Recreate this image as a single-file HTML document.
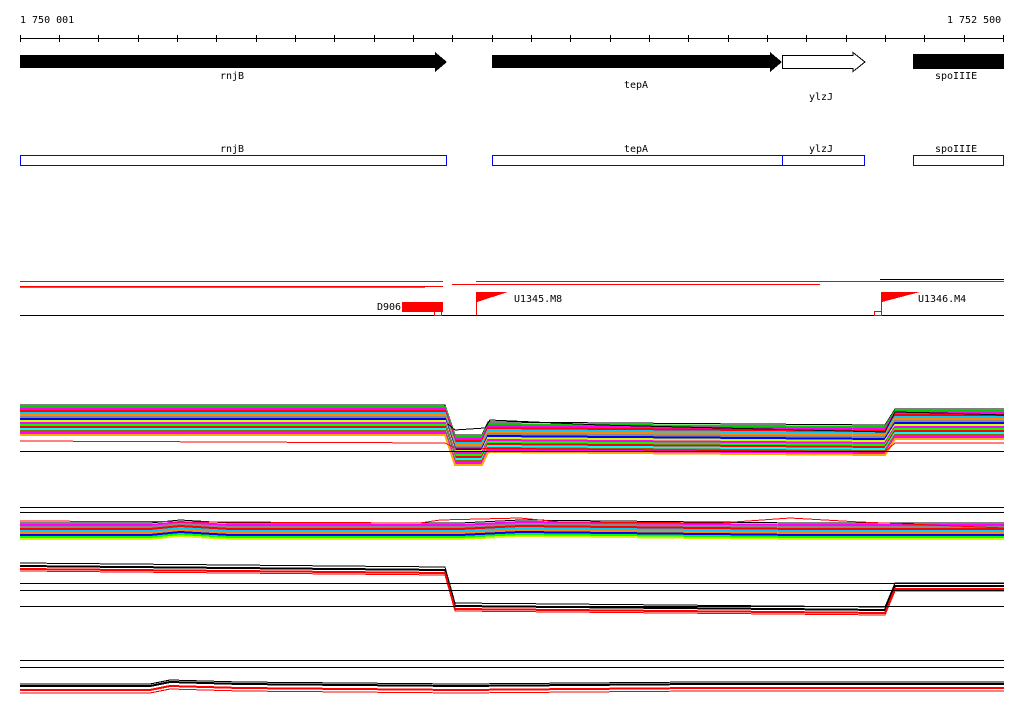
<!DOCTYPE html>
<html><head><meta charset="utf-8"><style>
html,body{margin:0;padding:0;background:#fff;width:1024px;height:714px;overflow:hidden}
svg{display:block}
text{font-family:"DejaVu Sans Mono","Liberation Mono",monospace;font-size:10px;fill:#000}
</style></head><body>
<svg width="1024" height="714" viewBox="0 0 1024 714" shape-rendering="crispEdges">
<defs>
<path id="b1" d="M20 0 L445 0 L455 30 L482 30 L488 17 L885 20 L895 4 L1004 4" fill="none"/>
<path id="b2" d="M20 0 L150 0 L180 -3 L230 0 L460 0 L520 -3 L800 0 L1004 0" fill="none"/>
<path id="b3" d="M20 0 L445 4 L455 40 L885 44 L895 20 L1004 20" fill="none"/>
<path id="b4" d="M20 0 L150 0 L170 -4 L240 -2 L460 0 L700 -2 L1004 -2" fill="none"/>
</defs>
<text x="20" y="23">1 750 001</text>
<text x="947" y="23">1 752 500</text>
<line x1="20" y1="38.5" x2="1004" y2="38.5" stroke="#000"/>
<g stroke="#000">
<line x1="20.5" y1="35" x2="20.5" y2="42"/><line x1="59.5" y1="35" x2="59.5" y2="42"/><line x1="98.5" y1="35" x2="98.5" y2="42"/><line x1="138.5" y1="35" x2="138.5" y2="42"/><line x1="177.5" y1="35" x2="177.5" y2="42"/><line x1="216.5" y1="35" x2="216.5" y2="42"/><line x1="256.5" y1="35" x2="256.5" y2="42"/><line x1="295.5" y1="35" x2="295.5" y2="42"/><line x1="334.5" y1="35" x2="334.5" y2="42"/><line x1="374.5" y1="35" x2="374.5" y2="42"/><line x1="413.5" y1="35" x2="413.5" y2="42"/><line x1="452.5" y1="35" x2="452.5" y2="42"/><line x1="492.5" y1="35" x2="492.5" y2="42"/><line x1="531.5" y1="35" x2="531.5" y2="42"/><line x1="570.5" y1="35" x2="570.5" y2="42"/><line x1="610.5" y1="35" x2="610.5" y2="42"/><line x1="649.5" y1="35" x2="649.5" y2="42"/><line x1="688.5" y1="35" x2="688.5" y2="42"/><line x1="728.5" y1="35" x2="728.5" y2="42"/><line x1="767.5" y1="35" x2="767.5" y2="42"/><line x1="806.5" y1="35" x2="806.5" y2="42"/><line x1="846.5" y1="35" x2="846.5" y2="42"/><line x1="885.5" y1="35" x2="885.5" y2="42"/><line x1="924.5" y1="35" x2="924.5" y2="42"/><line x1="964.5" y1="35" x2="964.5" y2="42"/><line x1="1003.5" y1="35" x2="1003.5" y2="42"/>
</g>
<polygon points="20,55 435,55 435,52 447,62 435,72 435,68 20,68" fill="#000"/>
<polygon points="492,55 770,55 770,52 782,62 770,72 770,68 492,68" fill="#000"/>
<polygon points="782.5,55.5 853,55.5 853,52.5 865,62 853,71.5 853,68.5 782.5,68.5" fill="#fff" stroke="#000"/>
<rect x="913" y="54" width="91" height="15" fill="#000"/>
<text x="220" y="79">rnjB</text>
<text x="624" y="88">tepA</text>
<text x="809" y="100">ylzJ</text>
<text x="935" y="79">spoIIIE</text>
<g fill="none" stroke="#00f">
<rect x="20.5" y="155.5" width="426" height="10"/>
<rect x="492.5" y="155.5" width="290" height="10"/>
<rect x="782.5" y="155.5" width="82" height="10"/>
<rect x="913.5" y="155.5" width="90" height="10"/>
</g>
<text x="220" y="152">rnjB</text>
<text x="624" y="152">tepA</text>
<text x="809" y="152">ylzJ</text>
<text x="935" y="152">spoIIIE</text>
<g stroke="#f00">
<line x1="20" y1="281.5" x2="443" y2="281.5"/>
<line x1="20" y1="286.5" x2="443" y2="286.5"/>
<line x1="452" y1="284.5" x2="820" y2="284.5"/>
<line x1="476" y1="281.5" x2="1004" y2="281.5"/>
<line x1="880" y1="279.5" x2="1004" y2="279.5" stroke="#000"/>
</g>
<line x1="20" y1="287.5" x2="425" y2="287.5" stroke="#0c0"/>
<line x1="20" y1="315.5" x2="1004" y2="315.5" stroke="#000"/>
<rect x="402" y="302" width="41" height="10" fill="#f00"/>
<rect x="434.5" y="311.5" width="7" height="4" fill="none" stroke="#f00"/>
<text x="377" y="310">D906</text>
<line x1="476.5" y1="292" x2="476.5" y2="315" stroke="#f00"/>
<polygon points="477,292 508,292 477,302" fill="#f00"/>
<text x="514" y="302">U1345.M8</text>
<line x1="881.5" y1="292" x2="881.5" y2="315" stroke="#f00"/>
<polygon points="882,292 920,292 882,302" fill="#f00"/>
<rect x="874.5" y="311.5" width="7" height="4" fill="none" stroke="#f00"/>
<text x="918" y="302">U1346.M4</text>
<g stroke-width="2">
<use href="#b1" transform="translate(0,405)" stroke="#000" stroke-width="1"/>
<use href="#b1" transform="translate(0,407)" stroke="#0c0"/>
<use href="#b1" transform="translate(0,409)" stroke="#f0f"/>
<use href="#b1" transform="translate(0,411)" stroke="#f00"/>
<use href="#b1" transform="translate(0,413)" stroke="#0cf"/>
<use href="#b1" transform="translate(0,415)" stroke="#f80"/>
<use href="#b1" transform="translate(0,417)" stroke="#888"/>
<use href="#b1" transform="translate(0,419)" stroke="#00f"/>
<use href="#b1" transform="translate(0,421)" stroke="#cf0"/>
<use href="#b1" transform="translate(0,423)" stroke="#f0f"/>
<use href="#b1" transform="translate(0,425)" stroke="#0f0"/>
<use href="#b1" transform="translate(0,427)" stroke="#f00"/>
<use href="#b1" transform="translate(0,429)" stroke="#0ff"/>
<use href="#b1" transform="translate(0,431)" stroke="#960"/>
<use href="#b1" transform="translate(0,433)" stroke="#f0f"/>
<use href="#b1" transform="translate(0,435)" stroke="#fa0"/>
</g>
<path d="M20 441 L445 443 L455 448 L885 452 L895 443 L1004 443" fill="none" stroke="#f00"/>
<line x1="20" y1="451.5" x2="1004" y2="451.5" stroke="#000"/>
<path d="M448 424 L455 430 L485 428 L490 420 L600 425 L885 432 L895 412 L940 413 L1004 415" fill="none" stroke="#000"/>
<line x1="20" y1="507.5" x2="1004" y2="507.5" stroke="#000"/>
<line x1="20" y1="512.5" x2="1004" y2="512.5" stroke="#000"/>
<g stroke-width="2">
<use href="#b2" transform="translate(0,523)" stroke="#000" stroke-width="1"/>
<use href="#b2" transform="translate(0,525)" stroke="#f0f"/>
<use href="#b2" transform="translate(0,527)" stroke="#888"/>
<use href="#b2" transform="translate(0,529)" stroke="#f00"/>
<use href="#b2" transform="translate(0,531)" stroke="#0cf"/>
<use href="#b2" transform="translate(0,533)" stroke="#f80"/>
<use href="#b2" transform="translate(0,535)" stroke="#00f"/>
<use href="#b2" transform="translate(0,537)" stroke="#0f0"/>
<use href="#b2" transform="translate(0,539)" stroke="#cf0"/>
</g>
<path d="M20 521 L420 523 L440 520 L520 518 L560 522 L720 523 L790 518 L860 522 L1004 528" fill="none" stroke="#f00"/>
<g>
<use href="#b3" transform="translate(0,563)" stroke="#000"/>
<use href="#b3" transform="translate(0,566)" stroke="#000" stroke-width="2"/>
<use href="#b3" transform="translate(0,569)" stroke="#f00" stroke-width="2"/>
<use href="#b3" transform="translate(0,571)" stroke="#f00"/>
</g>
<line x1="20" y1="583.5" x2="1004" y2="583.5" stroke="#000"/>
<line x1="20" y1="590.5" x2="1004" y2="590.5" stroke="#000"/>
<line x1="20" y1="606.5" x2="1004" y2="606.5" stroke="#000"/>
<line x1="20" y1="660.5" x2="1004" y2="660.5" stroke="#000"/>
<line x1="20" y1="667.5" x2="1004" y2="667.5" stroke="#000"/>
<g>
<use href="#b4" transform="translate(0,684)" stroke="#000"/>
<use href="#b4" transform="translate(0,686)" stroke="#000" stroke-width="2"/>
<use href="#b4" transform="translate(0,690)" stroke="#f00" stroke-width="2"/>
<use href="#b4" transform="translate(0,693)" stroke="#f00"/>
</g>
</svg>
</body></html>
